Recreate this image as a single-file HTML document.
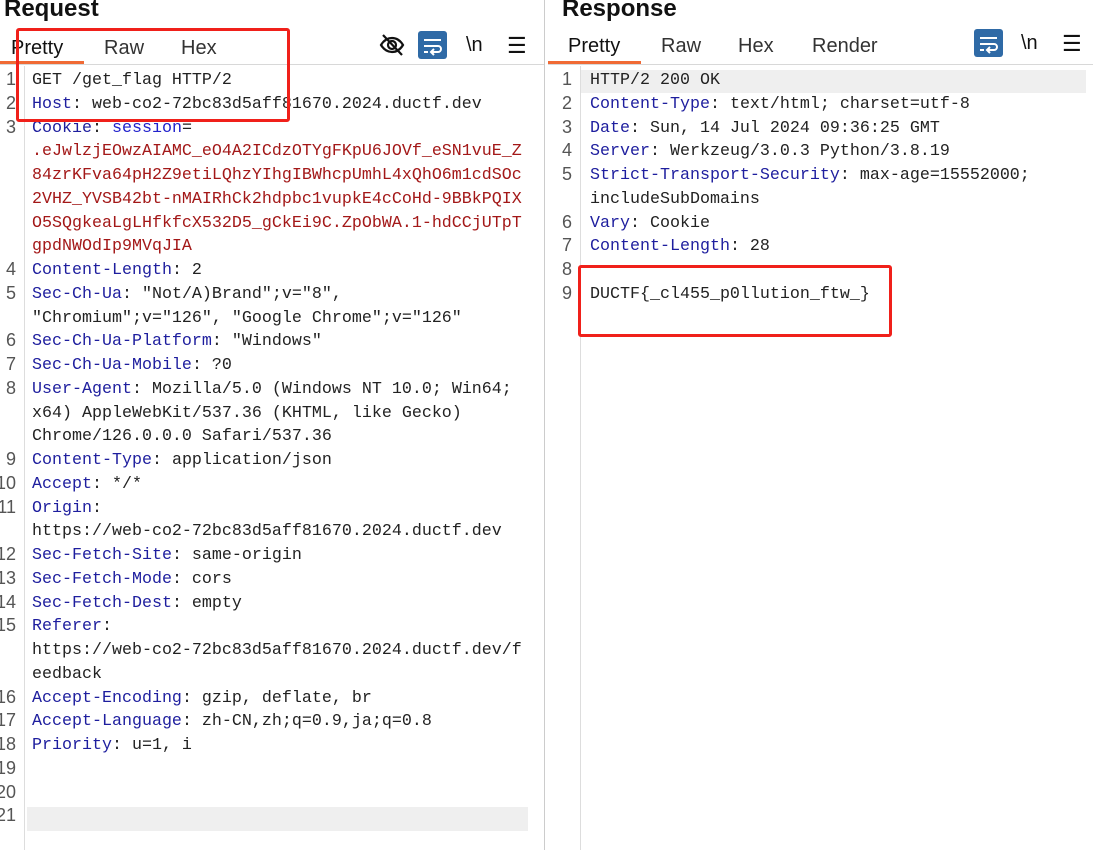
<!DOCTYPE html>
<html><head><meta charset="utf-8"><style>
body{margin:0;width:1093px;height:850px;background:#fff;position:relative;overflow:hidden;font-family:"Liberation Sans","Noto Sans CJK SC",sans-serif}
.h{position:absolute;top:-5px;font-size:24px;font-weight:bold;color:#111}
.tab{position:absolute;top:37px;font-size:20px;color:#333}
.ul{position:absolute;top:61px;height:3px;background:#f06a35}
.hl{position:absolute;height:1px;background:#d8d8d8;top:64px}
.code{position:absolute;font-family:"Liberation Mono",monospace;font-size:16.67px;line-height:23.75px;color:#222;white-space:pre}
.num{position:absolute;font-family:"Liberation Sans",sans-serif;font-size:18px;line-height:23.75px;color:#555;text-align:right;white-space:pre}
.k{color:#1e1e9e}.r{color:#a31818}.b{color:#2222cc}
.box{position:absolute;border:3px solid #f0201a;border-radius:3px}
</style></head><body>
<div class="h" style="left:4px">Request</div>
<div class="h" style="left:562px">Response</div>
<div class="tab" style="left:11px;color:#111">Pretty</div>
<div class="tab" style="left:104px">Raw</div>
<div class="tab" style="left:181px">Hex</div>
<div class="ul" style="left:0;width:84px"></div>
<div class="hl" style="left:0;width:544px"></div>
<div class="tab" style="left:568px;top:35px;color:#111">Pretty</div>
<div class="tab" style="left:661px;top:35px">Raw</div>
<div class="tab" style="left:738px;top:35px">Hex</div>
<div class="tab" style="left:812px;top:35px">Render</div>
<div class="ul" style="left:548px;width:93px"></div>
<div class="hl" style="left:548px;width:545px"></div>
<svg style="position:absolute;left:379px;top:32px" width="26" height="26" viewBox="0 0 26 26" fill="none" stroke="#111" stroke-width="2.2"><path d="M2 13c3-5 7-7 11-7s8 2 11 7c-3 5-7 7-11 7s-8-2-11-7z"/><circle cx="13" cy="13" r="4"/><path d="M4 3l19 20"/></svg>
<div style="position:absolute;left:418px;top:31px;width:29px;height:28px;background:#2f6aa6;border-radius:3px"></div>
<svg style="position:absolute;left:418px;top:31px" width="29" height="28" fill="none" stroke="#fff" stroke-width="2"><path d="M6 9h17M6 15h14a3 3 0 0 1 0 6h-6M16 18l-3 3 3 3M6 21h4"/></svg>
<div style="position:absolute;left:466px;top:34px;font-size:20px;color:#111">\n</div>
<div style="position:absolute;left:507px;top:33px;font-size:22px;color:#111">☰</div>
<div style="position:absolute;left:974px;top:29px;width:29px;height:28px;background:#2f6aa6;border-radius:3px"></div>
<svg style="position:absolute;left:974px;top:29px" width="29" height="28" fill="none" stroke="#fff" stroke-width="2"><path d="M6 9h17M6 15h14a3 3 0 0 1 0 6h-6M16 18l-3 3 3 3M6 21h4"/></svg>
<div style="position:absolute;left:1021px;top:32px;font-size:20px;color:#111">\n</div>
<div style="position:absolute;left:1062px;top:31px;font-size:22px;color:#111">☰</div>
<div style="position:absolute;left:24px;top:66px;width:1px;height:784px;background:#ddd"></div>
<div style="position:absolute;left:544px;top:0;width:1px;height:850px;background:#ccc"></div>
<div style="position:absolute;left:580px;top:66px;width:1px;height:784px;background:#ddd"></div>
<div style="position:absolute;left:27px;top:807px;width:501px;height:24px;background:#efefef"></div>
<div style="position:absolute;left:581px;top:70px;width:505px;height:23px;background:#efefef"></div>
<div class="num" style="left:-10px;top:68px;width:26px">1
2
3





4
5

6
7
8


9
10
11

12
13
14
15


16
17
18
19
20
21</div>
<div class="code" style="left:32px;top:69px">GET /get_flag HTTP/2
<span class="k">Host</span>: web-co2-72bc83d5aff81670.2024.ductf.dev
<span class="k">Cookie</span>: <span class="b">session</span>=
<span class="r">.eJwlzjEOwzAIAMC_eO4A2ICdzOTYgFKpU6JOVf_eSN1vuE_Z
84zrKFva64pH2Z9etiLQhzYIhgIBWhcpUmhL4xQhO6m1cdSOc
2VHZ_YVSB42bt-nMAIRhCk2hdpbc1vupkE4cCoHd-9BBkPQIX
O5SQgkeaLgLHfkfcX532D5_gCkEi9C.ZpObWA.1-hdCCjUTpT
gpdNWOdIp9MVqJIA</span>
<span class="k">Content-Length</span>: 2
<span class="k">Sec-Ch-Ua</span>: "Not/A)Brand";v="8",
"Chromium";v="126", "Google Chrome";v="126"
<span class="k">Sec-Ch-Ua-Platform</span>: "Windows"
<span class="k">Sec-Ch-Ua-Mobile</span>: ?0
<span class="k">User-Agent</span>: Mozilla/5.0 (Windows NT 10.0; Win64;
x64) AppleWebKit/537.36 (KHTML, like Gecko)
Chrome/126.0.0.0 Safari/537.36
<span class="k">Content-Type</span>: application/json
<span class="k">Accept</span>: */*
<span class="k">Origin</span>:
https://web-co2-72bc83d5aff81670.2024.ductf.dev
<span class="k">Sec-Fetch-Site</span>: same-origin
<span class="k">Sec-Fetch-Mode</span>: cors
<span class="k">Sec-Fetch-Dest</span>: empty
<span class="k">Referer</span>:
https://web-co2-72bc83d5aff81670.2024.ductf.dev/f
eedback
<span class="k">Accept-Encoding</span>: gzip, deflate, br
<span class="k">Accept-Language</span>: zh-CN,zh;q=0.9,ja;q=0.8
<span class="k">Priority</span>: u=1, i</div>
<div class="num" style="left:550px;top:68px;width:22px">1
2
3
4
5

6
7
8
9</div>
<div class="code" style="left:590px;top:69px">HTTP/2 200 OK
<span class="k">Content-Type</span>: text/html; charset=utf-8
<span class="k">Date</span>: Sun, 14 Jul 2024 09:36:25 GMT
<span class="k">Server</span>: Werkzeug/3.0.3 Python/3.8.19
<span class="k">Strict-Transport-Security</span>: max-age=15552000;
includeSubDomains
<span class="k">Vary</span>: Cookie
<span class="k">Content-Length</span>: 28

DUCTF{_cl455_p0llution_ftw_}</div>
<div class="box" style="left:16px;top:28px;width:268px;height:88px"></div>
<div class="box" style="left:578px;top:265px;width:308px;height:66px"></div>
</body></html>
